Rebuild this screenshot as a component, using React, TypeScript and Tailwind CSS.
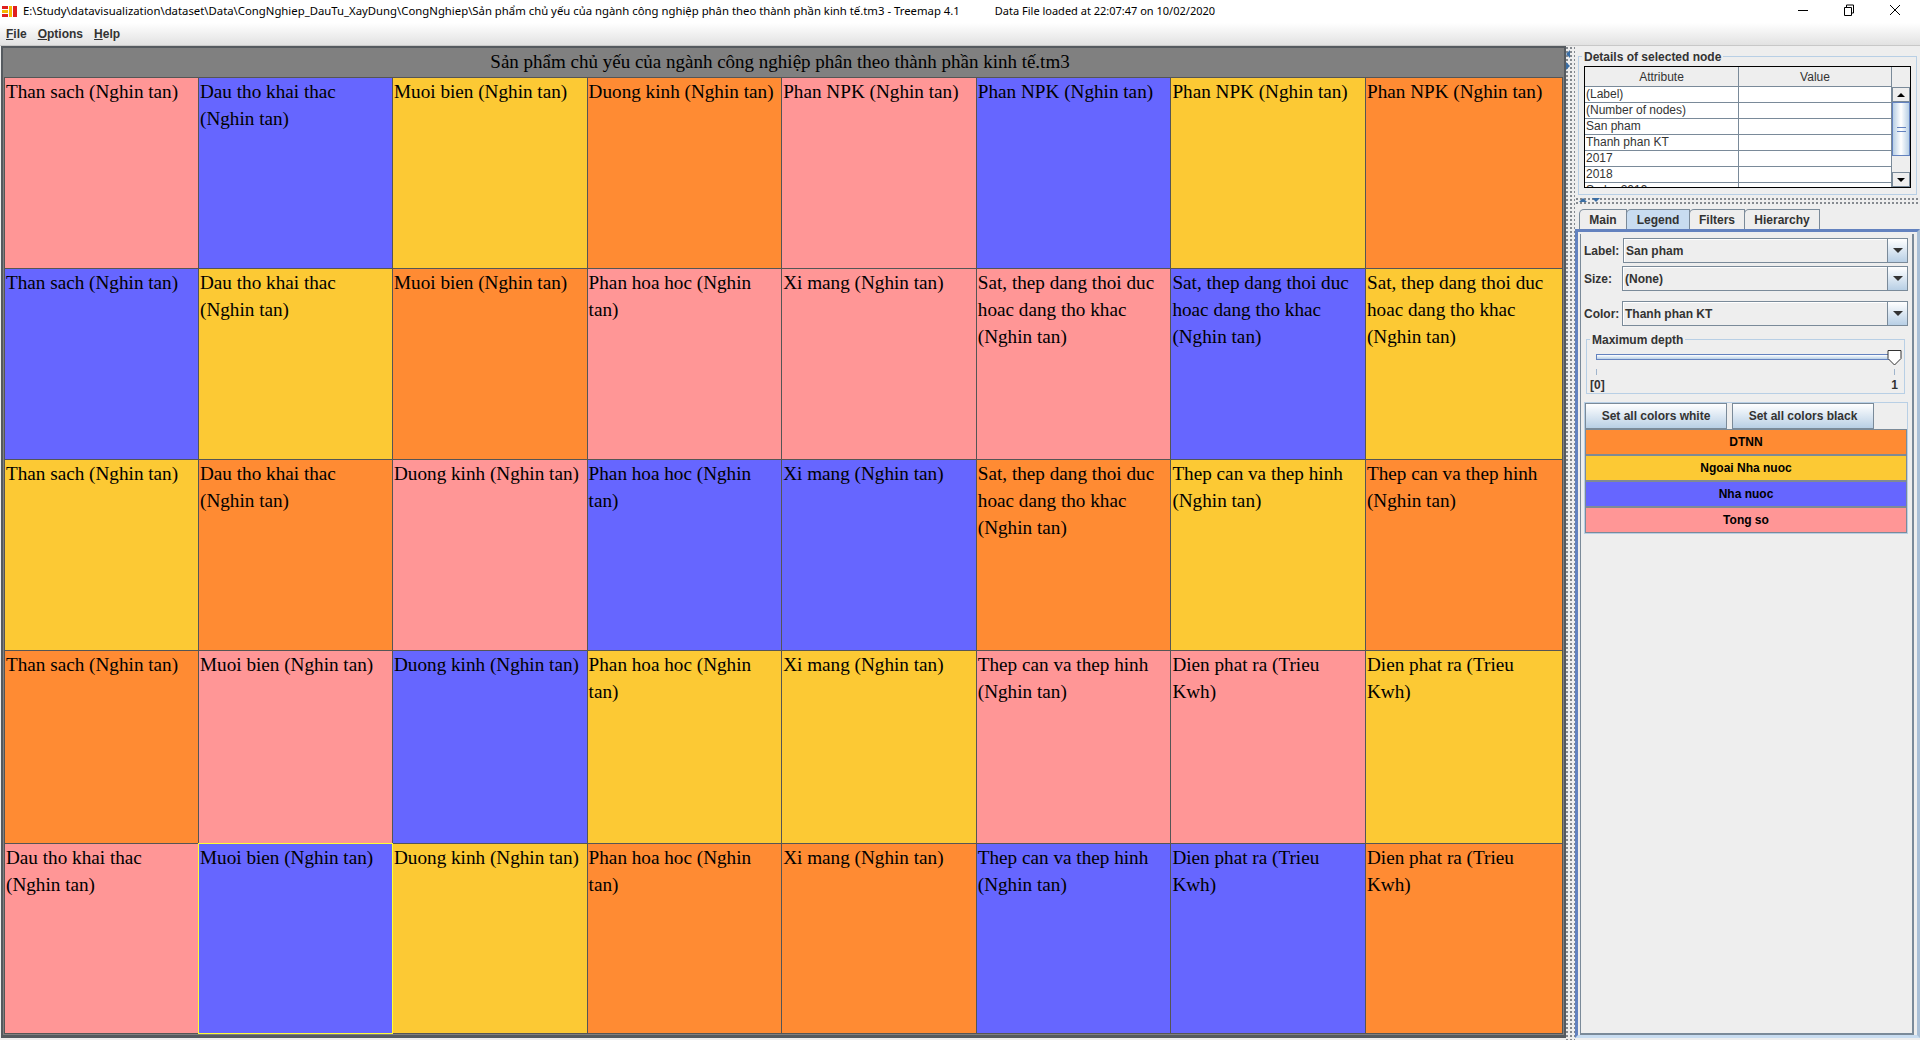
const PINK = "bg-[#ff9696]";
const BLUE = "bg-[#6666ff]";
const YELLOW = "bg-[#fcc934]";
const ORANGE = "bg-[#ff8b33]";

const THAN = "Than sach (Nghin tan)";
const DAU = "Dau tho khai thac (Nghin tan)";
const MUOI = "Muoi bien (Nghin tan)";
const DUONG = "Duong kinh (Nghin tan)";
const NPK = "Phan NPK (Nghin tan)";
const HOA = "Phan hoa hoc (Nghin tan)";
const XI = "Xi mang (Nghin tan)";
const SAT = "Sat, thep dang thoi duc hoac dang tho khac (Nghin tan)";
const THEP = "Thep can va thep hinh (Nghin tan)";
const DIEN = "Dien phat ra (Trieu Kwh)";

const cells: [string, string][] = [
  [THAN, PINK], [DAU, BLUE], [MUOI, YELLOW], [DUONG, ORANGE], [NPK, PINK], [NPK, BLUE], [NPK, YELLOW], [NPK, ORANGE],
  [THAN, BLUE], [DAU, YELLOW], [MUOI, ORANGE], [HOA, PINK], [XI, PINK], [SAT, PINK], [SAT, BLUE], [SAT, YELLOW],
  [THAN, YELLOW], [DAU, ORANGE], [DUONG, PINK], [HOA, BLUE], [XI, BLUE], [SAT, ORANGE], [THEP, YELLOW], [THEP, ORANGE],
  [THAN, ORANGE], [MUOI, PINK], [DUONG, BLUE], [HOA, YELLOW], [XI, YELLOW], [THEP, PINK], [DIEN, PINK], [DIEN, YELLOW],
  [DAU, PINK], [MUOI, BLUE], [DUONG, YELLOW], [HOA, ORANGE], [XI, ORANGE], [THEP, BLUE], [DIEN, BLUE], [DIEN, ORANGE],
];

const attributes = ["(Label)", "(Number of nodes)", "San pham", "Thanh phan KT", "2017", "2018", "So bo 2019"];

const legend: [string, string][] = [
  ["DTNN", ORANGE],
  ["Ngoai Nha nuoc", YELLOW],
  ["Nha nuoc", BLUE],
  ["Tong so", PINK],
];

function Combo({ label, value, labelWidth, mt }: { label: string; value: string; labelWidth: string; mt: string }) {
  return (
    <div className={`flex items-center ${mt}`}>
      <span className={`${labelWidth} shrink-0`}>{label}</span>
      <div className="flex h-[25px] flex-1 items-center border border-[#7a8a99] bg-[#eeeeee] shadow-[inset_1px_1px_0_#fff]">
        <span className="flex-1 pl-[2px]">{value}</span>
        <span className="flex h-full w-[20px] items-center justify-center border-l border-[#7a8a99] bg-gradient-to-b from-white to-[#b8cfe5]">
          <span className="h-0 w-0 border-x-[5px] border-t-[5px] border-x-transparent border-t-[#333]" />
        </span>
      </div>
    </div>
  );
}

function ScrollArrow({ up }: { up?: boolean }) {
  return (
    <div className="flex h-[15px] items-center justify-center border border-[#7a8a99] bg-[#eeeeee]">
      <span className={`h-0 w-0 border-x-[4px] border-x-transparent ${up ? "border-b-[4px] border-b-black" : "border-t-[4px] border-t-black"}`} />
    </div>
  );
}

function Tab({ name, active, width }: { name: string; active?: boolean; width: string }) {
  return (
    <div className={`flex h-[20px] items-center justify-center rounded-tl-[5px] border border-b-0 border-[#7a8a99] ${width} ${active ? "bg-[#c8dcf0]" : "bg-[#eeeeee]"} -mr-px`}>
      {name}
    </div>
  );
}

function Fieldset({ title, children, className }: { title: string; children: React.ReactNode; className: string }) {
  return (
    <div className={`relative border border-[#b8cfe5] ${className}`}>
      <span className="absolute left-[3px] top-[-7px] bg-[#eeeeee] px-[2px] leading-[14px]">{title}</span>
      {children}
    </div>
  );
}

export default function App() {
  return (
    <div className="flex h-[1040px] w-[1920px] flex-col overflow-hidden bg-[#eeeeee] font-['Liberation_Sans',sans-serif] text-[12px] font-bold text-[#333333]">
      {/* title bar */}
      <div className="flex h-[23px] shrink-0 items-center bg-white font-['Noto_Sans',sans-serif] text-[11.33px] font-normal text-black">
        <svg width="16" height="12" viewBox="0 0 16 12" className="ml-[2px] mr-[5px]">
          <rect x="0" y="0" width="6" height="3" fill="#e02020" />
          <rect x="0" y="4" width="6" height="3" fill="#f5b800" />
          <rect x="0" y="8" width="6" height="3" fill="#e02020" />
          <rect x="7" y="0" width="3" height="11" fill="#f5b800" />
          <rect x="11" y="0" width="4" height="11" fill="#e02020" />
        </svg>
        <span className="whitespace-nowrap">
          E:\Study\datavisualization\dataset\Data\CongNghiep_DauTu_XayDung\CongNghiep\Sản phẩm chủ yếu của ngành công nghiệp phân theo thành phần kinh tế.tm3 - Treemap 4.1
        </span>
        <span className="ml-[35px] whitespace-nowrap text-[11px]">Data File loaded at 22:07:47 on 10/02/2020</span>
        <div className="-mt-[3px] ml-auto mr-[2px] flex items-center text-black">
          <svg width="46" height="20" viewBox="0 0 46 20"><path d="M18 10.500h10" stroke="#000" /></svg>
          <svg width="46" height="20" viewBox="0 0 46 20" fill="none" stroke="#000"><path d="M18.500 7.500h7v8h-7z M20.500 7.500v-2.500h7v8h-2" /></svg>
          <svg width="46" height="20" viewBox="0 0 46 20" fill="none" stroke="#000"><path d="M18 5l10 10M28 5L18 15" /></svg>
        </div>
      </div>

      {/* menu bar */}
      <div className="flex h-[23px] shrink-0 items-center gap-[11px] border-b border-[#c8c8c8] bg-gradient-to-b from-white to-[#e2e2e2] pl-[6px] text-[#333333]">
        <span><u>F</u>ile</span>
        <span><u>O</u>ptions</span>
        <span><u>H</u>elp</span>
      </div>

      <div className="flex min-h-0 flex-1">
        {/* treemap */}
        <div className="ml-px mr-[-1px] mb-[2px] flex w-[1565px] shrink-0 flex-col border-2 border-b-[3px] border-[#555a5f] bg-[#808080] pb-[1px] pl-px pr-[1px]">
          <div className="h-[29px] shrink-0 pr-[7px] text-center font-['Liberation_Serif',serif] text-[19px] font-normal leading-[28px] text-black">
            Sản phẩm chủ yếu của ngành công nghiệp phân theo thành phần kinh tế.tm3
          </div>
          <div className="grid flex-1 grid-cols-[194px_194px_repeat(5,194.6px)_1fr] grid-rows-[191px_191px_191px_193px_1fr] border-l border-t border-[#555]">
            {cells.map(([text, color], i) => (
              <div
                key={i}
                className={`overflow-hidden border-r border-b pl-px font-['Liberation_Serif',serif] text-[19.2px] font-normal leading-[27px] text-black ${color} ${i === 33 ? "-ml-px -mt-px border-l border-t border-[#ffff33]" : "border-[#555]"}`}
              >
                {text}
              </div>
            ))}
          </div>
        </div>

        {/* splitter */}
        <div className="relative w-[10px] shrink-0 bg-[radial-gradient(#858a90_0.8px,transparent_1px)] bg-[length:4px_4px]">
          <span className="absolute left-[1px] top-[4px] h-0 w-0 border-y-[4px] border-r-[4px] border-y-transparent border-r-[#3a6ea5]" />
          <span className="absolute left-[1px] top-[16px] h-0 w-0 border-y-[4px] border-l-[4px] border-y-transparent border-l-[#3a6ea5]" />
        </div>

        {/* right column */}
        <div className="flex min-w-0 flex-1 flex-col">
          <Fieldset title="Details of selected node" className="ml-[3px] mr-[3px] mt-[10px] h-[139px] shrink-0 px-[5px] pt-[9px]">
            <div className="flex h-[122px] overflow-hidden border border-black bg-white font-normal">
              <div className="w-[307px] shrink-0">
                <div className="flex h-[20px] border-b border-[#7a8a99] bg-[#eeeeee]">
                  <span className="flex w-[154px] items-center justify-center border-r border-[#7a8a99]">Attribute</span>
                  <span className="flex flex-1 items-center justify-center border-r border-[#7a8a99]">Value</span>
                </div>
                {attributes.map((a) => (
                  <div key={a} className="flex h-[16px] border-b border-[#7a8a99] leading-[15px]">
                    <span className="w-[154px] border-r border-[#7a8a99] pl-px">{a}</span>
                    <span className="flex-1 border-r border-[#7a8a99]" />
                  </div>
                ))}
              </div>
              <div className="flex flex-1 flex-col bg-[#eeeeee] pt-[20px]">
                <ScrollArrow up />
                <div className="flex h-[54px] items-center justify-center border border-[#6382bf] bg-gradient-to-r from-[#b8cfe5] via-white to-[#b8cfe5]">
                  <span className="h-[5px] w-[9px] border-y border-[#6382bf]" />
                </div>
                <div className="flex-1" />
                <ScrollArrow />
              </div>
            </div>
          </Fieldset>

          {/* horizontal splitter */}
          <div className="relative mt-[2px] h-[8px] shrink-0 bg-[radial-gradient(#858a90_0.8px,transparent_1px)] bg-[length:4px_4px]">
            <span className="absolute left-[4px] top-[1px] h-0 w-0 border-x-[4px] border-b-[4px] border-x-transparent border-b-[#3a6ea5]" />
            <span className="absolute left-[17px] top-[1px] h-0 w-0 border-x-[4px] border-t-[4px] border-x-transparent border-t-[#3a6ea5]" />
          </div>

          {/* tabs */}
          <div className="ml-[4px] mt-[4px] flex h-[20px] shrink-0 text-[#333333]">
            <Tab name="Main" width="w-[48px]" />
            <Tab name="Legend" active width="w-[64px]" />
            <Tab name="Filters" width="w-[56px]" />
            <Tab name="Hierarchy" width="w-[76px]" />
          </div>

          <div className="mb-[2px] flex min-h-0 flex-1 flex-col border-[3px] border-[#c8dcf0] border-l-[#6382bf] border-t-[#6382bf] border-r-[#a9bfd6] p-[2px] pb-0 pr-[3px]">
            <div className="flex flex-1 flex-col border-b-2 border-l border-r-2 border-[#7a8a99] pl-[3px] pr-[4px] pt-[4px]">
              <Combo label="Label:" value="San pham" labelWidth="w-[39px]" mt="" />
              <Combo label="Size:" value="(None)" labelWidth="w-[38px]" mt="mt-[3px]" />
              <Combo label="Color:" value="Thanh phan KT" labelWidth="w-[38px]" mt="mt-[10px]" />

              <Fieldset title="Maximum depth" className="ml-[2px] mr-[3px] mt-[13px] h-[55px] shrink-0">
                <div className="relative mx-[9px] mt-[14px] h-[6px] border border-[#6382bf] bg-gradient-to-b from-white to-[#b8cfe5]">
                  <svg width="16" height="17" viewBox="0 0 16 17" className="absolute right-[-9px] top-[-6px]">
                    <path d="M1 1.500h13v8l-6.500 6.500l-6.500-6.500z" fill="#fff" stroke="#333" />
                  </svg>
                </div>
                <div className="mx-[9px] mt-[9px] flex justify-between">
                  <span className="h-[6px] w-px bg-[#9fb4cc]" />
                  <span className="h-[6px] w-px bg-[#9fb4cc]" />
                </div>
                <div className="mx-[3px] mt-[3px] flex justify-between pr-[3px] leading-[14px]">
                  <span>[0]</span>
                  <span>1</span>
                </div>
              </Fieldset>

              <div className="mt-[8px] border border-[#b8cfe5]">
                <div className="flex gap-[5px]">
                  <div className="flex h-[26px] w-[142px] items-center justify-center border border-[#7a8a99] bg-gradient-to-b from-white to-[#b8cfe5]">Set all colors white</div>
                  <div className="flex h-[26px] w-[142px] items-center justify-center border border-[#7a8a99] bg-gradient-to-b from-white to-[#b8cfe5]">Set all colors black</div>
                </div>
                <div className="flex flex-col gap-[2px] border border-[#7a8a99] bg-[#808a94]">
                  {legend.map(([name, color]) => (
                    <div key={name} className={`flex h-[24px] items-center justify-center text-black ${color}`}>{name}</div>
                  ))}
                </div>
              </div>
            </div>
          </div>
        </div>
      </div>
    </div>
  );
}
